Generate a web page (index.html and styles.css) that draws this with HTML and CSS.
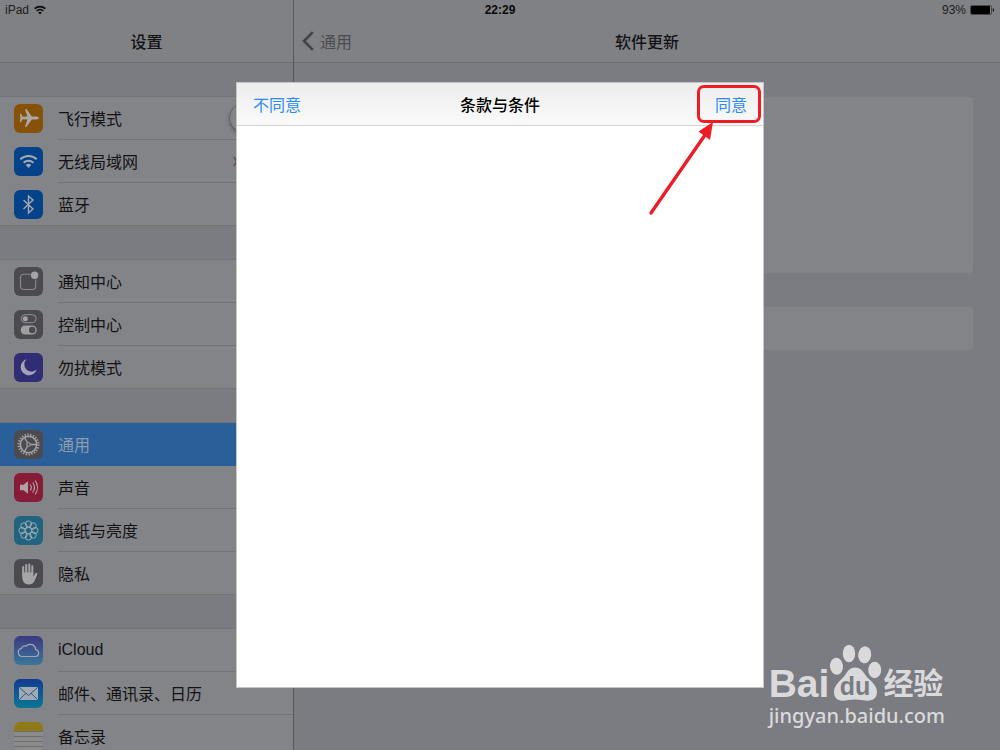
FILE: index.html
```
<!DOCTYPE html>
<html lang="zh-CN">
<head>
    <meta charset="UTF-8">
    <meta name="viewport" content="width=device-width, initial-scale=1.0">
    <title>设置</title>
    <link rel="stylesheet" href="styles.css">
</head>
<body>
    <div class="status-bar">
        <div class="status-left">
            <span>iPad</span>
            <svg width="12" height="10" viewBox="0 0 12 10" fill="none" stroke="#0b0b0c" stroke-width="1.7">
                <path d="M.7 3.7a7.6 7.6 0 0 1 10.6 0M2.7 6a4.8 4.8 0 0 1 6.6 0"/>
                <path d="M4.2 7.5a2.6 2.6 0 0 1 3.6 0L6 9.4z" fill="#0b0b0c" stroke="none"/>
            </svg>
        </div>
        <span class="status-time">22:29</span>
        <div class="status-right">
            <span>93%</span>
            <svg width="25" height="10" viewBox="0 0 25 10">
                <rect x=".5" y=".5" width="21" height="9" rx="1.5" fill="none" stroke="#47484a"/>
                <rect x="1" y="1" width="19" height="8" rx="1" fill="#000"/>
                <path d="M22.8 3a2.2 2.2 0 0 1 0 4z" fill="#111"/>
            </svg>
        </div>
    </div>

    <div class="settings">
        <nav class="sidebar">
            <header class="nav-bar"><h1>设置</h1></header>

            <ul class="group">
                <li class="row">
                    <svg class="icon" viewBox="0 0 29 29">
                        <rect width="29" height="29" rx="6" fill="#865108"/>
                        <path fill="#aaa9a5" d="M24.8 14c0 .9-1 1.3-2.2 1.4l-4.8.2-5.2 7.1H11l2.4-7.1-4.8-.4L7 18.2H5.9L6.4 14l-.5-4.2H7l1.6 3 4.8-.4L11 5.3h1.6l5.2 7.1 4.8.2c1.2.1 2.2.5 2.2 1.4z"/>
                    </svg>
                    <label class="row-body" for="airplane">飞行模式
                        <input type="checkbox" class="switch" id="airplane">
                    </label>
                </li>
                <li class="row">
                    <svg class="icon" viewBox="0 0 29 29" fill="none" stroke="#a5a9af" stroke-width="2">
                        <rect width="29" height="29" rx="6" fill="#04428a" stroke="none"/>
                        <path d="M6.3 12.3a11.8 11.8 0 0 1 16.4 0M9.6 15.700a7.2 7.2 0 0 1 9.8 0"/>
                        <path d="M11.8 18a4.2 4.2 0 0 1 5.4 0l-2.700 3z" fill="#a5a9af" stroke="none"/>
                    </svg>
                    <a class="row-body" href="#">无线局域网 <span class="value">xiaomi</span></a>
                </li>
                <li class="row">
                    <svg class="icon" viewBox="0 0 29 29">
                        <rect width="29" height="29" rx="6" fill="#04428a"/>
                        <path d="M9.5 10l9.5 9-4.5 4V6l4.5 4-9.5 9" fill="none" stroke="#a5a9af" stroke-width="1.4"/>
                    </svg>
                    <a class="row-body" href="#">蓝牙</a>
                </li>
            </ul>

            <ul class="group">
                <li class="row">
                    <svg class="icon" viewBox="0 0 29 29">
                        <rect width="29" height="29" rx="6" fill="#4b4b4f"/>
                        <path d="M16.5 7.3H10a3.5 3.5 0 0 0-3.5 3.5V19a3.5 3.5 0 0 0 3.5 3.5h8.2a3.5 3.5 0 0 0 3.5-3.5v-6.5" fill="none" stroke="#8b8b8f" stroke-width="1.1"/>
                        <circle cx="20.6" cy="8.2" r="3.7" fill="#a5a5a8"/>
                    </svg>
                    <a class="row-body" href="#">通知中心</a>
                </li>
                <li class="row">
                    <svg class="icon" viewBox="0 0 29 29">
                        <rect width="29" height="29" rx="6" fill="#4b4b4f"/>
                        <rect x="7.2" y="4.7" width="15" height="8" rx="4" fill="none" stroke="#919195"/>
                        <circle cx="11.3" cy="8.7" r="2.5" fill="#a5a5a8"/>
                        <rect x="6.7" y="15.5" width="16" height="9" rx="4.5" fill="#a0a0a3"/>
                        <circle cx="18.2" cy="20" r="3.2" fill="#4b4b4f"/>
                    </svg>
                    <a class="row-body" href="#">控制中心</a>
                </li>
                <li class="row">
                    <svg class="icon" viewBox="0 0 29 29">
                        <rect width="29" height="29" rx="6" fill="#302d74"/>
                        <path d="M12.5 6.2a8.2 8.2 0 1 0 10.2 10.4 6.9 6.9 0 0 1-10.2-10.4z" fill="#a5a4b4"/>
                    </svg>
                    <a class="row-body" href="#">勿扰模式</a>
                </li>
            </ul>

            <ul class="group">
                <li class="row selected">
                    <svg class="icon" viewBox="0 0 29 29" fill="none" stroke="#a3a4a8">
                        <rect width="29" height="29" rx="6" fill="#4b4b4f" stroke="none"/>
                        <circle cx="14.5" cy="14.5" r="9.9" stroke-width="2.2" stroke-dasharray="1.3 1.527"/>
                        <circle cx="14.5" cy="14.5" r="8.2" stroke-width="1.6"/>
                        <circle cx="14.5" cy="14.5" r="1.8" stroke-width="1.1"/>
                        <path d="M16.5 14.5H23M13.5 12.8l-3.2-5.7M13.5 16.2l-3.2 5.7" stroke-width="1.3"/>
                    </svg>
                    <a class="row-body" href="#">通用</a>
                </li>
                <li class="row">
                    <svg class="icon" viewBox="0 0 29 29">
                        <rect width="29" height="29" rx="6" fill="#861c37"/>
                        <path d="M6 11.8h3.5l4.5-3.6v12.6l-4.5-3.6H6z" fill="#b0a0a5"/>
                        <path d="M16.2 11.5a5 5 0 0 1 0 6M18.7 9.5a8.5 8.5 0 0 1 0 10M21.2 7.6a12 12 0 0 1 0 13.8" fill="none" stroke="#b0a0a5" stroke-width="1.2"/>
                    </svg>
                    <a class="row-body" href="#">声音</a>
                </li>
                <li class="row">
                    <svg class="icon" viewBox="0 0 29 29" fill="none" stroke="#9aacb4">
                        <rect width="29" height="29" rx="6" fill="#22637f" stroke="none"/>
                        <circle cx="14.5" cy="14.5" r="3.2"/>
                        <circle cx="14.5" cy="8" r="3.1"/>
                        <circle cx="19.1" cy="9.9" r="3.1"/>
                        <circle cx="21" cy="14.5" r="3.1"/>
                        <circle cx="19.1" cy="19.1" r="3.1"/>
                        <circle cx="14.5" cy="21" r="3.1"/>
                        <circle cx="9.9" cy="19.1" r="3.1"/>
                        <circle cx="8" cy="14.5" r="3.1"/>
                        <circle cx="9.9" cy="9.9" r="3.1"/>
                    </svg>
                    <a class="row-body" href="#">墙纸与亮度</a>
                </li>
                <li class="row">
                    <svg class="icon" viewBox="0 0 29 29" fill="none" stroke="#a5a5a8" stroke-width="2" stroke-linecap="round">
                        <rect width="29" height="29" rx="6" fill="#4b4b4f" stroke="none"/>
                        <path d="M9.2 16V8M12.2 14V6M15.3 14V5.5M18.3 15V7.2M22.3 14.8L19.5 20"/>
                        <path d="M8.2 13.5h11.1v4.3l2.2-2.6 1.5.5c-1.8 4.5-2.8 9.8-8 9.8-5.300 0-6.800-4-6.800-8.500z" fill="#a5a5a8" stroke="none"/>
                    </svg>
                    <a class="row-body" href="#">隐私</a>
                </li>
            </ul>

            <ul class="group">
                <li class="row">
                    <svg class="icon" viewBox="0 0 29 29">
                        <defs>
                            <linearGradient id="cloud-bg" x2="0" y2="1"><stop stop-color="#3b3980"/><stop offset="1" stop-color="#3a779b"/></linearGradient>
                        </defs>
                        <rect width="29" height="29" rx="6" fill="url(#cloud-bg)"/>
                        <path d="M8.3 20.5a4.1 4.1 0 0 1-.8-8.1 3.3 3.3 0 0 1 4.5-2.2 5.5 5.5 0 0 1 9.6 3.4 3.5 3.5 0 0 1 .2 6.9z" fill="none" stroke="#a1a7b7" stroke-width="1.2"/>
                    </svg>
                    <a class="row-body" href="#">iCloud</a>
                </li>
                <li class="row">
                    <svg class="icon" viewBox="0 0 29 29">
                        <defs>
                            <linearGradient id="mail-bg" x2="0" y2="1"><stop stop-color="#133b91"/><stop offset="1" stop-color="#087796"/></linearGradient>
                        </defs>
                        <rect width="29" height="29" rx="6" fill="url(#mail-bg)"/>
                        <rect x="5" y="8" width="19" height="13" rx="1" fill="#a1a9b1"/>
                        <path d="M5.5 8.5l9 8 9-8M5.5 20.5l6.5-6.3M23.5 20.5L17 14.2" fill="none" stroke="#205b91"/>
                    </svg>
                    <a class="row-body" href="#">邮件、通讯录、日历</a>
                </li>
                <li class="row">
                    <svg class="icon" viewBox="0 0 29 29">
                        <rect width="29" height="29" rx="6" fill="#8b8b8c"/>
                        <path d="M0 9V6a6 6 0 0 1 6-6h17a6 6 0 0 1 6 6v3z" fill="#907917"/>
                        <path d="M0 9.5h29M0 14.5h29M0 19.5h29M0 24.5h29" stroke="#6d6e70"/>
                    </svg>
                    <a class="row-body" href="#">备忘录</a>
                </li>
            </ul>
        </nav>

        <main class="detail">
            <header class="nav-bar">
                <a class="back" href="#">
                    <svg width="12" height="20" viewBox="0 0 12 20" fill="none" stroke="#424347" stroke-width="2.6"><path d="M10.8 1.2L2 10l8.8 8.8"/></svg>
                    通用
                </a>
                <h2>软件更新</h2>
            </header>
            <div class="card card-large"></div>
            <div class="card"></div>
        </main>
    </div>

    <div class="overlay">
        <section class="modal" role="dialog" aria-labelledby="terms-title">
            <header class="modal-bar">
                <button type="button">不同意</button>
                <h2 id="terms-title">条款与条件</h2>
                <button type="button" class="agree">同意</button>
            </header>
            <svg class="arrow" width="68" height="96" viewBox="0 0 68 96">
                <path d="M3 91L57 13" stroke="#ee1c24" stroke-width="3.4" stroke-linecap="round"/>
                <path d="M65 0l-3 18-11.5-8.500z" fill="#ee1c24"/>
            </svg>
        </section>
    </div>

    <div class="watermark">
        <div class="brand">
            <span class="bai">Bai</span>
            <svg class="paw" width="52" height="58" viewBox="0 0 52 58">
                <ellipse cx="20" cy="9.5" rx="6.2" ry="8.8"/>
                <ellipse cx="35.7" cy="10.8" rx="6.5" ry="8.5" transform="rotate(8 35.7 10.8)"/>
                <ellipse cx="7.5" cy="22.3" rx="6.5" ry="8.5" transform="rotate(-6 7.5 22.3)"/>
                <ellipse cx="45.700" cy="26" rx="6.5" ry="8.3"/>
                <path d="M26 23.5c5 0 7.5 3 10 7 3.5 5.5 12 9.5 12 17.5 0 5.5-4 8.7-9 8.7-4.500 0-8-1.2-13-1.2s-8 1.2-12.5 1.2C8.5 56.7 5 53.5 5 48c0-8 8-12 11.5-17.5 2.500-4 5-7 9.5-7z"/>
                <text x="26" y="51" text-anchor="middle">du</text>
            </svg>
            <span class="jingyan">经验</span>
        </div>
        <div class="site">jingyan.baidu.com</div>
    </div>
</body>
</html>
```
FILE: styles.css
```
* {
    margin: 0;
    padding: 0;
    box-sizing: border-box;
}

body {
    font-family: 'Liberation Sans', 'Noto Sans CJK SC', sans-serif;
    font-size: 16px;
    color: #131315;
    background: #7b7c81;
    height: 100vh;
    overflow: hidden;
    position: relative;
}

a {
    color: inherit;
    text-decoration: none;
}

h1, h2 {
    font-size: 16px;
    font-weight: 500;
}

/* Status bar */
.status-bar {
    position: absolute;
    z-index: 1;
    top: 0;
    left: 0;
    right: 0;
    height: 20px;
    padding: 0 5px;
    display: grid;
    grid-template-columns: 1fr auto 1fr;
    align-items: center;
    font-size: 12px;
    color: #1d1d1f;
}

.status-left,
.status-right {
    display: flex;
    align-items: center;
    gap: 5px;
}

.status-right {
    justify-content: flex-end;
    gap: 4px;
}

.status-time {
    font-weight: bold;
    color: #0b0b0c;
}

/* Two column layout */
.settings {
    display: flex;
    height: 100%;
}

.sidebar {
    width: 294px;
    flex-shrink: 0;
    border-right: 1px solid #57585b;
}

.detail {
    flex: 1;
}

.nav-bar {
    height: 63px;
    padding-top: 20px;
    display: flex;
    align-items: center;
    justify-content: center;
    position: relative;
    background: #808184;
    border-bottom: 1px solid #6c6d70;
}

.back {
    position: absolute;
    left: 8px;
    display: flex;
    align-items: center;
    gap: 6px;
    color: #4b4c50;
}

.group {
    list-style: none;
    margin-top: 33px;
    border-top: 1px solid #737478;
    background: #838488;
}

.row {
    height: 43px;
    padding-left: 14px;
    display: flex;
    align-items: center;
    gap: 15px;
}

.row:last-child {
    border-bottom: 1px solid #737478;
}

.row:last-child .row-body {
    border-bottom: none;
}

.icon {
    width: 29px;
    height: 29px;
    flex-shrink: 0;
}

.row-body {
    flex: 1;
    height: 100%;
    display: flex;
    align-items: center;
    justify-content: space-between;
    padding-right: 14px;
    border-bottom: 1px solid #737478;
}

.row.selected {
    background: #2b5f99;
    color: #8b9cb1;
}

.row.selected .row-body {
    border-color: #2b5f99;
}

.value {
    color: #4b4c50;
}

.switch {
    appearance: none;
    width: 50px;
    height: 30px;
    border: 1px solid #737478;
    border-radius: 15px;
}

.switch::before {
    content: "";
    display: block;
    width: 28px;
    height: 28px;
    border-radius: 50%;
    background: #848589;
    box-shadow: 0 2px 4px #55565a, 0 0 1px #333;
}

.card {
    height: 43px;
    margin: 34px 27px 0 28px;
    border-radius: 4px;
    background: #838488;
}

.card-large {
    height: 176px;
}

/* Terms dialog */
.overlay {
    position: absolute;
    inset: 0;
    padding-top: 20px;
    display: flex;
    align-items: center;
    justify-content: center;
}

.modal {
    width: 528px;
    height: 606px;
    position: relative;
    background: #fff;
    border: 1px solid #c4c5c7;
}

.modal-bar {
    height: 43px;
    padding: 0 2px;
    display: grid;
    grid-template-columns: 1fr auto 1fr;
    align-items: center;
    background: linear-gradient(#ededee, #fafafa);
    border-bottom: 1px solid #d3d3d4;
    color: #000;
}

.modal-bar button {
    justify-self: start;
    padding-left: 14px;
    font: inherit;
    color: #2a8bf7;
    background: none;
    border: none;
}

.modal-bar .agree {
    justify-self: end;
    width: 64px;
    height: 38px;
    padding-left: 4px;
    border: 3px solid #ee1c24;
    border-radius: 7px;
}

.arrow {
    position: absolute;
    top: 39px;
    right: 47px;
}

/* Watermark */
.watermark {
    position: absolute;
    right: 55px;
    bottom: 20px;
    color: #dadadc;
}

.brand {
    display: flex;
    align-items: flex-end;
    line-height: 36px;
    font-weight: bold;
}

.bai {
    font-size: 39px;
}

.paw {
    fill: #dadadc;
}

.paw text {
    font-size: 25px;
    fill: #7b7c81;
}

.jingyan {
    margin-left: 2px;
    font-size: 30px;
}

.site {
    font-family: 'Noto Sans', sans-serif;
    font-size: 20px;
    font-weight: 500;
    line-height: 28px;
}
```
